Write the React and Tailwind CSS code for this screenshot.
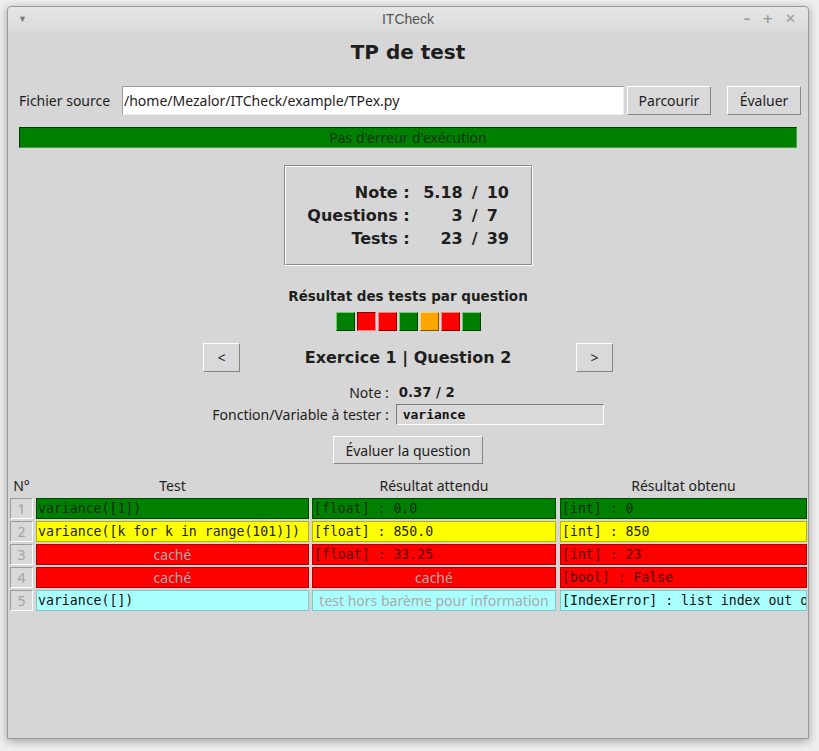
import React from "react";

const SANS = { fontFamily: '"Noto Sans", "Open Sans", sans-serif' };
const BOLD = { fontFamily: '"DejaVu Sans", "Noto Sans", sans-serif' };
const MONO = { fontFamily: '"DejaVu Sans Mono", "Liberation Mono", monospace' };

function Btn({ className = "", children }) {
  return (
    <div
      className={
        "flex items-center justify-center bg-[#d9d9d9] border border-t-white border-l-white border-b-[#858585] border-r-[#858585] text-[14px] text-[#1e1e1e] " +
        className
      }
      style={SANS}
    >
      {children}
    </div>
  );
}

const rows = [
  {
    n: "1",
    test: { kind: "mono", text: "variance([1])" },
    exp: { kind: "mono", text: "[float] : 0.0" },
    got: { kind: "mono", text: "[int] : 0" },
    color: "green",
  },
  {
    n: "2",
    test: { kind: "mono", text: "variance([k for k in range(101)])" },
    exp: { kind: "mono", text: "[float] : 850.0" },
    got: { kind: "mono", text: "[int] : 850" },
    color: "yellow",
  },
  {
    n: "3",
    test: { kind: "hidden", text: "caché" },
    exp: { kind: "mono", text: "[float] : 33.25" },
    got: { kind: "mono", text: "[int] : 23" },
    color: "red",
  },
  {
    n: "4",
    test: { kind: "hidden", text: "caché" },
    exp: { kind: "hidden", text: "caché" },
    got: { kind: "mono", text: "[bool] : False" },
    color: "red",
  },
  {
    n: "5",
    test: { kind: "mono", text: "variance([])" },
    exp: { kind: "hidden", text: "test hors barème pour information" },
    got: { kind: "mono", text: "[IndexError] : list index out of range" },
    color: "cyan",
  },
];

const cellStyles = {
  green: "bg-[#008000] border-[#004a00] text-[#0f2a0f]",
  yellow: "bg-[#ffff00] border-[#b4b400] text-[#222222]",
  red: "bg-[#ff0000] border-[#b00000] text-[#4e0000]",
  cyan: "bg-[#aaffff] border-[#86c8c8] text-[#111111]",
};

function Cell({ data, color, className = "" }) {
  const base =
    "h-[21px] border overflow-hidden whitespace-nowrap leading-[19px] " +
    cellStyles[color] +
    " " +
    className;
  if (data.kind === "mono") {
    return (
      <div className={base + " pl-[1px] text-[13.2px]"} style={MONO}>
        {data.text}
      </div>
    );
  }
  return (
    <div
      className={base + " text-center text-[14px] !text-[#a9a9a9]"}
      style={SANS}
    >
      {data.text}
    </div>
  );
}

function Square({ color, sunken }) {
  const map = {
    g: sunken
      ? "bg-[#008000] border-t-[#004000] border-l-[#004000] border-b-[#80c080] border-r-[#80c080]"
      : "bg-[#008000] border-t-[#80c080] border-l-[#80c080] border-b-[#004000] border-r-[#004000]",
    r: sunken
      ? "bg-[#ff0000] border-t-[#800000] border-l-[#800000] border-b-[#ff8080] border-r-[#ff8080]"
      : "bg-[#ff0000] border-t-[#ff8080] border-l-[#ff8080] border-b-[#800000] border-r-[#800000]",
    o: sunken
      ? "bg-[#ffa500] border-t-[#805300] border-l-[#805300] border-b-[#ffd280] border-r-[#ffd280]"
      : "bg-[#ffa500] border-t-[#ffd280] border-l-[#ffd280] border-b-[#805300] border-r-[#805300]",
  };
  return <div className={"w-[19px] h-[19px] border " + map[color]} />;
}

export default function App() {
  return (
    <div className="w-[819px] h-[751px] bg-[#efefef] pt-[6px] pl-[7px] overflow-hidden">
      <div className="w-[802px] h-[733px] border border-[#9a9a9a] rounded-t-[4px] bg-[#d6d6d6] shadow-[0_2px_10px_rgba(0,0,0,0.35)] flex flex-col overflow-hidden">
        {/* Title bar */}
        <div className="h-[24px] shrink-0 bg-gradient-to-b from-[#e6e6e6] to-[#dadada] flex items-center relative rounded-t-[4px]">
          <div className="absolute left-[10px] top-[5px] text-[9px] text-[#7a7a7a]">▼</div>
          <div
            className="flex-1 text-center text-[14px] text-[#555555] leading-[24px]"
            style={{ fontFamily: '"Liberation Sans", Arial, sans-serif' }}
          >
            ITCheck
          </div>
          <div
            className="absolute right-[12px] top-0 h-[24px] flex items-center gap-[12px] text-[13px] text-[#9a9a9a] font-bold"
            style={{ fontFamily: '"DejaVu Sans", sans-serif' }}
          >
            <span>–</span>
            <span>+</span>
            <span className="font-normal">✕</span>
          </div>
        </div>

        {/* Content */}
        <div className="flex flex-col">
          <div
            className="mt-[9px] h-[24px] leading-[24px] text-center text-[20px] font-bold text-[#1e1e1e]"
            style={BOLD}
          >
            TP de test
          </div>

          {/* File row */}
          <div className="mt-[22px] flex items-center h-[29px] pl-[11px]">
            <div className="w-[103px] text-[14px] text-[#1e1e1e]" style={SANS}>
              Fichier source
            </div>
            <div
              className="w-[502px] h-[29px] bg-white border border-t-[#9c9c9c] border-l-[#9c9c9c] border-b-[#ececec] border-r-[#ececec] flex items-center pl-[1px] text-[14px] text-[#1e1e1e]"
              style={SANS}
            >
              /home/Mezalor/ITCheck/example/TPex.py
            </div>
            <Btn className="ml-[3px] w-[84px] h-[29px]">Parcourir</Btn>
            <Btn className="ml-[16px] w-[74px] h-[29px]">Évaluer</Btn>
          </div>

          {/* Status bar */}
          <div
            className="mt-[12px] ml-[11px] w-[778px] h-[21px] bg-[#008000] border border-t-[#003800] border-l-[#003800] border-b-[#4aa04a] border-r-[#4aa04a] flex items-center justify-center text-[14px] text-[#173317]"
            style={SANS}
          >
            Pas d'erreur d'exécution
          </div>

          {/* Score box */}
          <div className="mt-[17px] self-center w-[249px] h-[101px] border border-t-[#8c8c8c] border-l-[#8c8c8c] border-b-white border-r-white">
            <div className="w-full h-full border border-t-white border-l-white border-b-[#8c8c8c] border-r-[#8c8c8c] flex items-center justify-center">
              <div
                className="grid grid-cols-[auto_53px_24px_22px] text-[16px] font-bold text-[#1e1e1e] leading-[23px]"
                style={BOLD}
              >
                <div className="text-right">Note :</div>
                <div className="text-right">5.18</div>
                <div className="text-center">/</div>
                <div>10</div>
                <div className="text-right">Questions :</div>
                <div className="text-right">3</div>
                <div className="text-center">/</div>
                <div>7</div>
                <div className="text-right">Tests :</div>
                <div className="text-right">23</div>
                <div className="text-center">/</div>
                <div>39</div>
              </div>
            </div>
          </div>

          <div
            className="mt-[21px] h-[18px] leading-[18px] text-center text-[13.5px] font-bold text-[#1e1e1e]"
            style={BOLD}
          >
            Résultat des tests par question
          </div>

          <div className="mt-[7px] self-center flex gap-[2px]">
            <Square color="g" />
            <Square color="r" sunken />
            <Square color="r" />
            <Square color="g" />
            <Square color="o" />
            <Square color="r" />
            <Square color="g" />
          </div>

          {/* Navigation */}
          <div className="mt-[12px] self-center w-[410px] flex items-center justify-between">
            <Btn className="w-[37px] h-[29px]">&lt;</Btn>
            <div className="text-[16px] font-bold text-[#1e1e1e]" style={BOLD}>
              Exercice 1 | Question 2
            </div>
            <Btn className="w-[37px] h-[29px]">&gt;</Btn>
          </div>

          {/* Note / Function */}
          <div className="mt-[11px] self-center grid grid-cols-[auto_208px] gap-x-[7px] items-center">
            <div className="text-right text-[14px] text-[#1e1e1e] leading-[20px] h-[20px]" style={SANS}>
              Note :
            </div>
            <div className="pl-[3px] text-[13.3px] font-bold text-[#1e1e1e] leading-[20px] h-[20px]" style={BOLD}>
              0.37 / 2
            </div>
            <div className="mt-[1px] text-right text-[14px] text-[#1e1e1e]" style={SANS}>
              Fonction/Variable à tester :
            </div>
            <div
              className="mt-[1px] h-[21px] bg-[#d9d9d9] border border-t-[#7c7c7c] border-l-[#7c7c7c] border-b-white border-r-white flex items-center pl-[6px] text-[13px] font-bold text-[#111111]"
              style={MONO}
            >
              variance
            </div>
          </div>

          <Btn className="mt-[11px] self-center w-[150px] h-[28px]">Évaluer la question</Btn>

          {/* Table header */}
          <div
            className="mt-[12px] ml-[2px] flex h-[20px] leading-[20px] text-[14px] text-[#1e1e1e]"
            style={SANS}
          >
            <div className="w-[23px] text-center">N°</div>
            <div className="ml-[3px] w-[273px] text-center">Test</div>
            <div className="ml-[3px] w-[244px] text-center">Résultat attendu</div>
            <div className="ml-[4px] w-[247px] text-center">Résultat obtenu</div>
          </div>

          <div className="mt-[2px] ml-[2px] flex flex-col gap-[2px]">
            {rows.map((r) => (
              <div key={r.n} className="flex h-[21px]">
                <div
                  className="w-[23px] h-[21px] bg-[#d9d9d9] border border-t-[#9a9a9a] border-l-[#9a9a9a] border-b-white border-r-white text-center text-[14px] leading-[19px] text-[#a3a3a3]"
                  style={SANS}
                >
                  {r.n}
                </div>
                <Cell data={r.test} color={r.color} className="ml-[3px] w-[273px]" />
                <Cell data={r.exp} color={r.color} className="ml-[3px] w-[244px]" />
                <Cell data={r.got} color={r.color} className="ml-[4px] w-[247px]" />
              </div>
            ))}
          </div>
        </div>
      </div>
    </div>
  );
}
